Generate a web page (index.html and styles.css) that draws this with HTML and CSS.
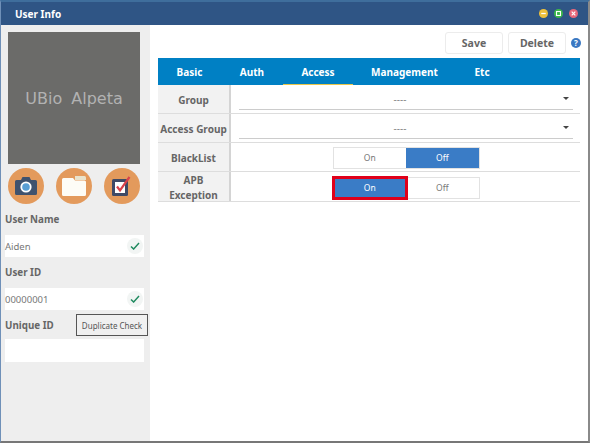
FILE: index.html
```html
<!DOCTYPE html>
<html lang="en">

<head>
  <meta charset="utf-8" />
  <title>User Info</title>
  <link rel="stylesheet" href="styles.css">
</head>

<body>
  <div class="ventana">
    <div class="titulo">
      <span class="titulo-texto">User Info</span>
      <div class="controles">
        <span class="control amarillo"><svg viewBox="0 0 10 10"><path d="M2.5 5h5" stroke="#fff" stroke-width="1.4"/></svg></span>
        <span class="control verde"><svg viewBox="0 0 10 10"><rect x="2.8" y="2.8" width="4.4" height="4.4" fill="none" stroke="#fff" stroke-width="1.2"/></svg></span>
        <span class="control rojo"><svg viewBox="0 0 10 10"><path d="M3 3l4 4M7 3l-4 4" stroke="#fff" stroke-width="1.3"/></svg></span>
      </div>
    </div>

    <div class="cuerpo">
      <div class="lateral">
        <div class="foto">UBio Alpeta</div>

        <div class="iconos">
          <span class="circulo">
            <svg width="24" height="22" viewBox="0 0 24 22">
              <path d="M1 6.500a1.500 1.500 0 0 1 1.500-1.500H7l1.500-3h7L17 5h4.500a1.500 1.500 0 0 1 1.500 1.500v12a1.500 1.500 0 0 1-1.500 1.500h-19A1.500 1.500 0 0 1 1 18.500z" fill="#3f526e"/>
              <circle cx="12" cy="12" r="5.600" fill="#fff"/>
              <circle cx="12" cy="12" r="3.800" fill="#5a9fd4"/>
            </svg>
          </span>
          <span class="circulo">
            <svg width="24" height="20" viewBox="0 0 24 20">
              <path d="M13 0h9.500a1.500 1.500 0 0 1 1.500 1.500V4H13z" fill="#e9e3cc"/>
              <path d="M0 3.500A1.500 1.500 0 0 1 1.500 2H11l2 2.500h9.500A1.500 1.500 0 0 1 24 6v12.500a1.500 1.500 0 0 1-1.500 1.500h-21A1.500 1.500 0 0 1 0 18.500z" fill="#fdfcf6"/>
            </svg>
          </span>
          <span class="circulo">
            <svg width="22" height="22" viewBox="0 0 22 22">
              <rect x="1" y="4" width="16" height="17" rx="1.500" fill="#3f4a66"/>
              <rect x="4" y="7" width="10" height="11" fill="#fff"/>
              <path d="M6 11.500l3 4L18.500 2" fill="none" stroke="#d8404a" stroke-width="2.200"/>
            </svg>
          </span>
        </div>

        <div class="etiqueta">User Name</div>
        <div class="campo">
          <span>Aiden</span>
          <span class="ok"><svg width="10" height="8" viewBox="0 0 12 10"><path d="M1 5.500l3.300 3.300L11 1.200" fill="none" stroke="#1f8a5f" stroke-width="1.800"/></svg></span>
        </div>

        <div class="etiqueta">User ID</div>
        <div class="campo">
          <span>00000001</span>
          <span class="ok"><svg width="10" height="8" viewBox="0 0 12 10"><path d="M1 5.500l3.300 3.300L11 1.200" fill="none" stroke="#1f8a5f" stroke-width="1.800"/></svg></span>
        </div>

        <div class="fila-unico">
          <div class="etiqueta">Unique ID</div>
          <button class="duplicado" type="button">Duplicate Check</button>
        </div>
        <div class="campo campo-unico"></div>
      </div>

      <div class="principal">
        <div class="acciones">
          <button class="accion" type="button">Save</button>
          <button class="accion" type="button">Delete</button>
          <span class="ayuda">?</span>
        </div>

        <div class="tabs">
          <span class="tab tab-basic">Basic</span>
          <span class="tab tab-auth">Auth</span>
          <span class="tab tab-access activa">Access</span>
          <span class="tab tab-management">Management</span>
          <span class="tab tab-etc">Etc</span>
        </div>

        <div class="tabla">
          <div class="fila">
            <div class="nombre">Group</div>
            <div class="valor">
              <div class="selector">----<span class="flecha"></span></div>
            </div>
          </div>
          <div class="fila">
            <div class="nombre">Access Group</div>
            <div class="valor">
              <div class="selector">----<span class="flecha"></span></div>
            </div>
          </div>
          <div class="fila">
            <div class="nombre">BlackList</div>
            <div class="valor centrado">
              <div class="toggle">
                <span class="opcion">On</span>
                <span class="opcion encendida">Off</span>
              </div>
            </div>
          </div>
          <div class="fila fila-alta">
            <div class="nombre">APB<br>Exception</div>
            <div class="valor centrado">
              <div class="toggle">
                <span class="opcion encendida marcada">On</span>
                <span class="opcion">Off</span>
              </div>
            </div>
          </div>
        </div>
      </div>
    </div>
  </div>
</body>

</html>
```

FILE: styles.css
```css
body {
  margin: 0;
  font-family: "Noto Sans", sans-serif;
  color: #666;
  overflow: hidden;
}

.ventana {
  width: 590px;
  height: 443px;
  box-sizing: border-box;
  background-color: #fff;
  border-top: 2px solid #3f6e9c;
  border-left: 1px solid #6f90b8;
  border-right: 2px solid #8a8a8a;
  border-bottom: 2px solid #777;
  display: flex;
  flex-direction: column;
}

.titulo {
  height: 23px;
  flex: none;
  background-color: #2f5585;
  display: flex;
  align-items: center;
  justify-content: space-between;
  padding: 0 10px 0 14px;
}

.titulo-texto {
  color: #fff;
  font-size: 10px;
  font-weight: 700;
}

.controles {
  display: flex;
  gap: 6px;
}

.control {
  width: 9px;
  height: 9px;
  border-radius: 50%;
  display: block;
}

.control svg {
  display: block;
}

.amarillo {
  background-color: #eec03c;
}

.verde {
  background-color: #3cb94a;
}

.rojo {
  background-color: #e8687a;
}

.cuerpo {
  flex: 1;
  display: flex;
  min-height: 0;
}

.lateral {
  width: 149px;
  flex: none;
  background-color: #eeeeee;
  padding: 7px 0 0 4px;
  box-sizing: border-box;
}

.foto {
  width: 132px;
  height: 132px;
  margin-left: 3px;
  background-color: #6b6b69;
  color: #b2b2b2;
  font-family: "DejaVu Sans", sans-serif;
  font-size: 16px;
  word-spacing: 4px;
  display: flex;
  align-items: center;
  justify-content: center;
}

.iconos {
  display: flex;
  gap: 12px;
  margin: 4px 0 0 3px;
}

.circulo {
  width: 36px;
  height: 36px;
  border-radius: 50%;
  background-color: #e39a5c;
  display: flex;
  align-items: center;
  justify-content: center;
}

.etiqueta {
  font-size: 9.800px;
  font-weight: 700;
  line-height: 15px;
  padding-top: 1px;
  color: #666;
}

.iconos + .etiqueta {
  margin-top: 7px;
}

.campo {
  width: 139px;
  height: 22px;
  margin: 8px 0 7px;
  background-color: #fff;
  box-sizing: border-box;
  padding: 0 1px 0 0;
  display: flex;
  align-items: center;
  justify-content: space-between;
  font-size: 9.500px;
  color: #777;
}

.ok {
  width: 16px;
  height: 16px;
  border-radius: 50%;
  background-color: #f2f5f4;
  display: flex;
  align-items: center;
  justify-content: center;
}

.fila-unico {
  display: flex;
  align-items: center;
  justify-content: space-between;
  margin-top: -3px;
  width: 143px;
}

.duplicado {
  width: 72px;
  height: 22px;
  padding: 0;
  background-color: #f0f0f0;
  border: 1px solid #555;
  font-family: "Noto Sans", sans-serif;
  font-size: 8px;
  color: #555;
}

.campo-unico {
  height: 23px;
  margin-top: 3px;
}

.principal {
  flex: 1;
  min-width: 0;
}

.acciones {
  height: 33px;
  display: flex;
  align-items: flex-start;
  padding: 7px 0 0 295px;
  box-sizing: border-box;
}

.accion {
  width: 58px;
  height: 22px;
  margin-right: 5px;
  padding: 0;
  background-color: #fff;
  border: 1px solid #ececec;
  border-radius: 3px;
  font-family: "Noto Sans", sans-serif;
  font-size: 10.500px;
  font-weight: 700;
  color: #666;
}

.ayuda {
  width: 10px;
  height: 10px;
  margin: 6px 0 0 0;
  border-radius: 50%;
  background-color: #3a78c2;
  color: #fff;
  font-size: 8px;
  font-weight: 700;
  line-height: 10px;
  text-align: center;
}

.tabs {
  width: 422px;
  height: 27px;
  margin-left: 8px;
  background-color: #0080c4;
  display: flex;
}

.tab {
  color: #fff;
  font-size: 10px;
  font-weight: 700;
  line-height: 29px;
  text-align: center;
  box-sizing: border-box;
}

.tab-basic {
  width: 63px;
}

.tab-auth {
  width: 62px;
}

.tab-access {
  width: 70px;
}

.tab-management {
  width: 103px;
}

.tab-etc {
  width: 52px;
}

.activa {
  border-bottom: 1px solid #e8c64a;
}

.tabla {
  width: 422px;
  margin-left: 8px;
}

.fila {
  display: grid;
  grid-template-columns: 73px 1fr;
  grid-template-rows: 28px;
  height: 29px;
  border-bottom: 1px solid #ddd;
  box-sizing: border-box;
}

.fila-alta {
  grid-template-rows: 29px;
  height: 30px;
}

.nombre {
  box-sizing: border-box;
  background-color: #f2f2f2;
  border-right: 2px solid #d4d4d4;
  padding-top: 2px;
  font-size: 10px;
  font-weight: 700;
  line-height: 15px;
  text-align: center;
  display: flex;
  align-items: center;
  justify-content: center;
  white-space: nowrap;
}

.fila-alta .nombre {
  padding-top: 3px;
}

.valor {
  padding: 0 7px 3px 8px;
  display: flex;
  align-items: flex-end;
}

.selector {
  flex: 1;
  height: 22px;
  box-sizing: border-box;
  padding-right: 12px;
  border-bottom: 1px solid #ccc;
  font-size: 10px;
  color: #888;
  display: flex;
  align-items: center;
  justify-content: center;
  position: relative;
}

.flecha {
  position: absolute;
  right: 4px;
  top: 9px;
  border-left: 3px solid transparent;
  border-right: 3px solid transparent;
  border-top: 3px solid #444;
}

.centrado {
  padding: 2px 0 0 1px;
  align-items: center;
  justify-content: center;
}

.toggle {
  display: flex;
  width: 147px;
  height: 22px;
  box-sizing: border-box;
  border: 1px solid #e2e2e2;
}

.opcion {
  flex: 1;
  font-size: 8.500px;
  line-height: 20px;
  text-align: center;
  color: #777;
}

.encendida {
  background-color: #3a7cc6;
  color: #fff;
}

.marcada {
  outline: 3px solid #e0001a;
  outline-offset: -1px;
}
```
